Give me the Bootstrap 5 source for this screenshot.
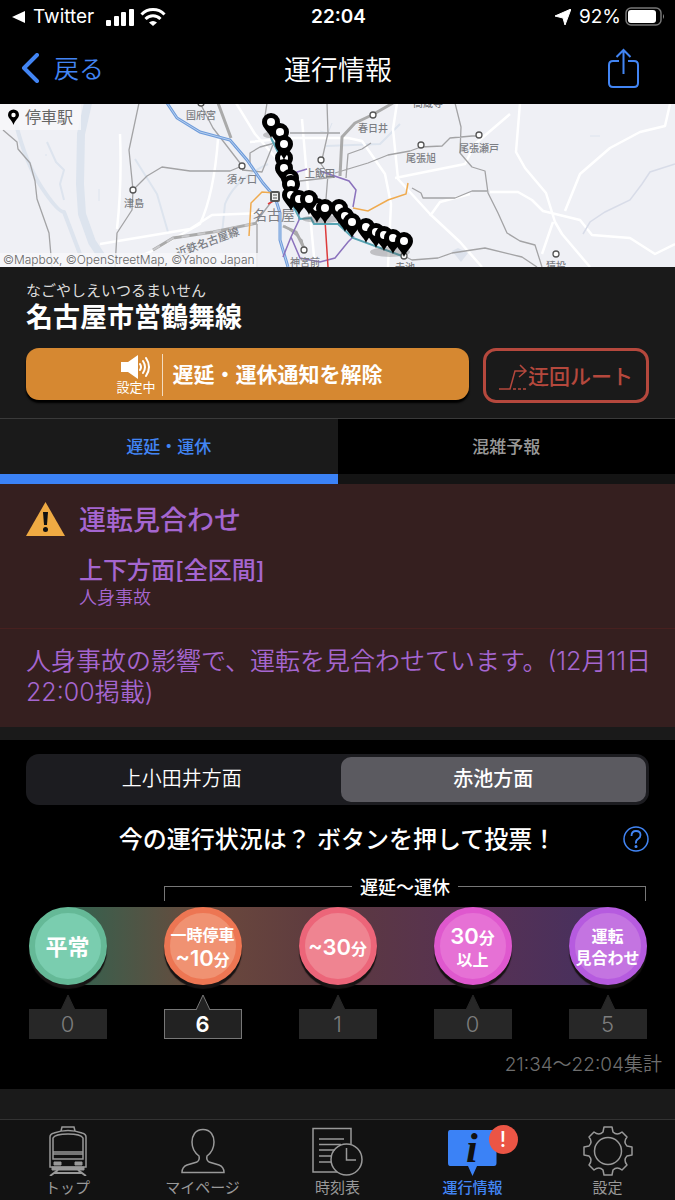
<!DOCTYPE html>
<html lang="ja" data-bs-theme="dark">
<head>
<meta charset="utf-8">
<meta name="viewport" content="width=device-width, initial-scale=1">
<title>運行情報</title>
<link rel="stylesheet" href="https://cdn.jsdelivr.net/npm/bootstrap@5.3.0/dist/css/bootstrap.min.css">
<style>
  :root { --accent: #4285f4; --panel: #1a1a1a; --edge: 26px; }
  body { background: #000; color: #fff; font-family: "Inter", "Noto Sans CJK JP", sans-serif; }
  svg { display: block; flex: none; }
  button { color: inherit; }
  .jp-light { font-weight: 350; }
  .jp-medium { font-weight: 500; }
  .edge-x { padding-left: var(--edge); padding-right: var(--edge); }
  .third { flex: 1 1 0; }

  .status-bar { height: 34px; padding: 0 10px 0 12px; font-size: 19px; line-height: 34px; }
  .top-bar { height: 70px; padding: 0 36px 0 21px; }
  .top-bar h1 { font-size: 27px; line-height: 34px; padding-top: 3px; }
  .back-link { color: var(--accent); font-size: 25px; line-height: 34px; gap: 15px; }
  .back-link span { padding-top: 3px; }

  .map-view { background: #eff0f5; height: 163px; }
  .map-view svg { width: 100%; height: 163px; }

  .panel { background: var(--panel); }
  .line-info { padding-top: 14px; padding-bottom: 15px; }
  .line-info .kana { font-size: 15px; line-height: 20px; color: #ddd; }
  .line-info h2 { font-size: 27px; line-height: 34px; margin-bottom: 13px; }
  .btn-notify { background: #d68831; border: 0; border-radius: 13px; height: 52px; font-size: 21px; line-height: 26px; box-shadow: 0 3px 2px #000; padding: 2px 0 0 4px; }
  .btn-notify .state { font-size: 13px; line-height: 16px; }
  .btn-notify .rule { width: 1px; height: 42px; background: #f3dcc0; margin: 0 10px 0 6px; }
  .btn-route { width: 166px; height: 55px; border: 3px solid #b5483d; border-radius: 13px; background: none; color: #b5483d; font-size: 21px; line-height: 26px; padding: 2px 0 0; }
  .button-row { gap: 14px; }

  .view-tabs { border-top: 1px solid #3a3a3a; background: var(--panel); }
  .view-tabs button { flex: 1 1 0; height: 65px; border: 0; border-bottom: 10px solid #141414; background: #000; color: #999; font-size: 17px; line-height: 24px; }
  .view-tabs .on { background: var(--panel); border-color: #3b82f6; color: var(--accent); }

  .notice { background: #351f1f; color: #a566d0; }
  .notice-head { padding-top: 17px; padding-bottom: 19px; gap: 14px; border-bottom: 1px solid #48201f; }
  .notice-head h3 { font-size: 27px; line-height: 40px; margin-bottom: 14px; color: inherit; }
  .notice-head h4 { font-size: 24px; line-height: 32px; color: inherit; }
  .notice-head p { font-size: 18px; line-height: 22px; }
  .notice-body { padding: 17px 20px 19px var(--edge); font-size: 25px; line-height: 31px; }
  .spacer-s { height: 13px; }

  .direction { background: #1c1c20; border-radius: 13px; padding: 3px; height: 51px; gap: 6px; }
  .direction label { flex: 1 1 0; border-radius: 10px; font-size: 20px; line-height: 45px; text-align: center; font-weight: 350; cursor: pointer; }
  .direction .btn-check:checked + label { background: #5b5a60; font-weight: 500; }
  .vote { padding-top: 14px; padding-bottom: 12px; }
  .vote h3 { font-size: 24px; line-height: 34px; padding-top: 2px; }
  .vote-title { margin-top: 16px; display: grid; grid-template-columns: 26px 1fr 26px; align-items: center; }
  .help { border: 0; padding: 0; background: none; color: var(--accent); }

  .bracket { margin: 18px 29px 6px calc(20% + 29px); height: 26px; gap: 8px; }
  .bracket span { height: 15px; border-top: 1px solid #777; flex: 1 1 0; }
  .bracket span:first-child { border-left: 1px solid #777; }
  .bracket span:last-child { border-right: 1px solid #777; }
  .bracket b { font-size: 18px; line-height: 26px; }
  .scale > * { flex: 1 1 0; }
  .scale { background: linear-gradient(90deg, #32624f, #6b493c 25%, #5c3940 50%, #573153 75%, #46305f) center / 80% 100% no-repeat; }
  .vote-btn { width: 78px; height: 78px; border-radius: 50%; border: 6px solid var(--ring); background: var(--fill); box-shadow: 0 4px 1px #171313; color: #fff; font-size: 16px; line-height: 22px; white-space: nowrap; padding: 2px 0 0; font-weight: 700; display: flex; align-items: center; justify-content: center; }
  .vote-btn .big { font-size: 22px; line-height: 24px; font-weight: 600; }
  .v-ok { --ring: #65b997; --fill: #7acdaf; }
  .v-10 { --ring: #ed7653; --fill: #f09272; }
  .v-30 { --ring: #ec6579; --fill: #ef8491; }
  .v-30p { --ring: #df58ce; --fill: #e671d5; }
  .v-stop { --ring: #b65bdf; --fill: #c474e1; }
  .counts { margin-top: 9px; }
  .tally { width: 78px; --tone: #272727; --line: #272727; color: #7d7d7d; font-size: 22px; line-height: 28px; font-weight: 350; }
  .tally svg { margin: 0 auto -1px; position: relative; }
  .tally output { display: block; text-align: center; background: var(--tone); border: 1px solid var(--line); }
  .tally.top { --tone: #222; --line: #777; color: #fff; font-weight: 600; }
  .stamp { margin-top: 14px; padding-right: 13px; font-size: 19px; line-height: 24px; color: #6e6e6e; }

  .tab-bar { background: #121212; border-top: 1px solid #333; height: 81px; }
  .tab-bar a { flex: 1 1 0; padding-top: 2px; font-size: 15px; line-height: 23px; color: #999; text-decoration: none; }
  .tab-bar a.on { color: var(--accent); }
  .alert-dot { position: absolute; left: 46px; top: 3px; width: 29px; height: 29px; border-radius: 50%; background: #eb5545; color: #fff; font-size: 21px; line-height: 29px; text-align: center; font-weight: 500; }
</style>
</head>
<body>
<div class="d-flex flex-column min-vh-100">

  <div class="status-bar d-flex align-items-center">
    <div class="third d-flex align-items-center gap-2">
      <svg width="13" height="12" viewBox="0 0 13 12"><path d="M13 0v12L0 6z" fill="#fff"/></svg>
      <span class="me-1">Twitter</span>
      <svg width="60" height="20" viewBox="0 0 60 20" fill="#fff">
        <rect x="0" y="13" width="5" height="6" rx="1"/><rect x="8" y="9" width="5" height="10" rx="1"/><rect x="15" y="5" width="5" height="14" rx="1"/><rect x="23" y="2" width="5" height="17" rx="1"/>
        <g fill="none" stroke="#fff" stroke-width="3"><path d="M35.500 7.500a16 16 0 0 1 23 0"/><path d="M39.500 12a10.500 10.500 0 0 1 15 0"/></g>
        <path d="M43 15.500a6 6 0 0 1 8 0L47 19z"/>
      </svg>
    </div>
    <div class="fw-semibold">22:04</div>
    <div class="third d-flex align-items-center justify-content-end">
      <svg class="me-2" width="16" height="16" viewBox="0 0 16 16"><path d="M16 0 10 16 8 9 0 7z" fill="#fff" stroke="#fff" stroke-linejoin="round"/></svg>
      <span class="me-1">92%</span>
      <svg width="40" height="20" viewBox="0 0 40 20"><rect x="1" y="1" width="35" height="17" rx="5" fill="none" stroke="#777" stroke-width="1.500"/><rect x="3" y="3" width="28" height="13" rx="3" fill="#fff"/><path d="M38 7q2 2.500 0 5z" fill="#888"/></svg>
    </div>
  </div>

  <header class="top-bar d-flex align-items-center">
    <div class="third"><a href="#" class="back-link jp-light d-inline-flex align-items-center text-decoration-none">
      <svg width="18" height="30" viewBox="0 0 18 30"><path d="M16 2 3 15l13 13" fill="none" stroke="#4285f4" stroke-width="4" stroke-linecap="round" stroke-linejoin="round"/></svg><span>戻る</span></a></div>
    <h1 class="jp-light mb-0 ms-3">運行情報</h1>
    <div class="third d-flex justify-content-end">
      <button class="help" aria-label="共有"><svg width="31" height="42" viewBox="0 0 31 42" fill="none" stroke="#4285f4" stroke-width="2"><path d="M11 13H5q-4 0-4 4v18q0 4 4 4h21q4 0 4-4V17q0-4-4-4h-6M15.500 26V2M8.500 9l7-7 7 7"/></svg></button>
    </div>
  </header>

  <div class="map-view">
    <svg viewBox="0 0 675 163" preserveAspectRatio="xMidYMid slice" fill="none" role="img" aria-label="停車駅の地図">
      <defs>
        <g id="pin"><path d="M0 16C-2 10-9 6-9 0a9 9 0 0 1 18 0C9 6 2 10 0 16z" fill="#000"/><circle r="4" fill="#fff"/></g>
      </defs>
      <g stroke="#dde4ee" stroke-linejoin="round">
        <path d="M88-1 81 30 80 80 82 110 92 138 110 165" stroke-width="8"/>
        <path d="M16 20Q26 60 42 84T64 108L80 150" stroke-width="4"/>
        <path d="M47 38 56 58 64 66 60 80 64 96 M135 55 157 90 168 128 M268 60Q235 75 225 100L222 130 M326 42 380 40 400 20" stroke-width="2"/>
        <path d="M99 85v12M46 50v2M320 27l8 2 4-10M590 32h10" stroke-width="1"/>
      </g>
      <g stroke="#fff" stroke-width="2.500" stroke-linejoin="round">
        <path d="M236-1 255 30 290 70M218 35Q214 90 200 120L150 148 110 165M100 140 190 125 212 111 260 109M250 38 290 34 348 34 362 37 385 70 391 100 388 163M302 15 310 110 315 163M117 125Q122 80 120 30M397-1 393 25 398 75 430 110 460 138 482 163M520-1 516 48 525 64 546 89 555 118 562 130 590 163M490 88 518 88 532 96 543 107 580 116 592 131 630 134 655 150 675 140M565 107 580 70 610 44 640 28 665 22 670 0M395 74 465 60 475 40 510 10M430 112 440 98 470 90M553 118 542 150" />
      </g>
      <path d="M675 60 650 68 642 80 630 96 605 108 590 118 583 130" stroke="#d8dce8" stroke-width="1.500"/>
      <path d="m452 147 6-3 10 5-7 9z" fill="#dde2ec"/>
      <g stroke="#a3a3a5" stroke-width="1.300" stroke-linejoin="round">
        <path d="M3 26 17 38 18 45 30 59 35 77 37 95 49 129 52 163M139-1 129 46 133 86 132 106 117 129 115 163M133 86 147 72 162 63 190 67H230L242 62M200-1 213 24 240 59M242 66 262 68 274 38 M250 60 250 49 260 43 275 39M290 29H340M327-1 328 29 321 60 328 70 326 95M267-1 265 12M335 69 368 59 388 51 410 47 421 43 442 42 450 34 472 32 478 32M455-1 461 23 460 49 472 63 485 67 488 89 498 109 507 129 520 137 535 141 542 163M412 84 421 89 423 94H455L472 87H487M404 152 412 156 438 154 452 149 485 144 522 153 537 163M346 74 348 50 362 45 371 39M257 120V163M304 146 302 136 285 122M275 93 256 118M300 77 335 73"/>
        <path d="M340 72 342 33 355 19 372 11 393-1M218-1 231 34 M153 146 173 134 213 128 257 119M283 122 296 128 304 144" stroke="#aaa" stroke-width="3"/>
        <path d="M153 146 173 134 213 128 257 119" stroke="#c9c9cc" stroke-width="2" stroke-dasharray="8 8"/>
      </g>
      <path d="M167-1 177 14 200 28 230 36 247 56 263 79 275 93 280 109 280 136 288 163" stroke="#6f9cdb" stroke-width="3"/>
      <path d="M167-1 177 14 200 28 230 36 247 56 263 79 275 93 280 109 280 136 288 163" stroke="#b8d0ee" stroke-width="1"/>
      <path d="M249 132 251 99 262 88 275 89M353 104 368 107 388 96 406 90 408 79" stroke="#efaa4e" stroke-width="1.500"/>
      <path d="M307 65 297 68 299 116 291 133 283 153M291 133 300 154 320 158 335 154 348 138 354 132M320 67 349 77 356 86 353 103" stroke="#8b72bd" stroke-width="1.500"/>
      <path d="M325 116 328 163M268 100 275 96" stroke="#dd3b3b" stroke-width="1.500"/>
      <path d="M271 34 284 60 291 98 300 115 311 114 314 120H338L353 134 402 152" stroke="#58a5b4" stroke-width="2"/>
      <g fill="#fff" stroke="#555" stroke-width="1.300">
        <circle cx="133" cy="86" r="3"/><circle cx="242" cy="62" r="3"/><circle cx="321" cy="56" r="3"/><circle cx="373" cy="11" r="3"/><circle cx="421" cy="41" r="3"/><circle cx="479" cy="31" r="3"/><circle cx="304" cy="146" r="3"/><circle cx="556" cy="150" r="3"/><circle cx="404" cy="152" r="3"/><circle cx="201" cy="-1" r="3"/>
      </g>
      <rect x="271" y="88" width="8" height="9" rx="1" fill="#eee" stroke="#555" stroke-width="2"/><path d="M273 91h4M273 94h4" stroke="#555"/>
      <g fill="#7c7e84" font-size="10" font-weight="500">
        <text x="186" y="15">国府宮</text><text x="124" y="103">津島</text><text x="227" y="79">須ヶ口</text><text x="305" y="73">上飯田</text>
        <text x="358" y="28">春日井</text><text x="406" y="58">尾張旭</text><text x="459" y="48">尾張瀬戸</text><text x="413" y="3">高蔵寺</text>
        <text x="290" y="162">神宮前</text><text x="395" y="167">赤池</text><text x="546" y="166">猿投</text>
        <text x="253" y="116" font-size="14" font-weight="400">名古屋</text>
        <text transform="translate(178 153) rotate(-20)" font-size="11">近鉄名古屋線</text>
      </g>
      <g opacity=".3" fill="#555"><ellipse cx="269" cy="31" rx="6" ry="3"/><ellipse cx="322" cy="115" rx="20" ry="4"/><ellipse cx="390" cy="148" rx="20" ry="5"/></g>
      <use href="#pin" x="271" y="18"/><use href="#pin" x="280" y="28"/><use href="#pin" x="284" y="54"/><use href="#pin" x="284" y="40"/><use href="#pin" x="284" y="64"/><use href="#pin" x="290" y="74"/><use href="#pin" x="291" y="80"/><use href="#pin" x="291" y="91"/><use href="#pin" x="299" y="95"/><use href="#pin" x="317" y="103"/><use href="#pin" x="309" y="95"/><use href="#pin" x="325" y="104"/><use href="#pin" x="339" y="104"/><use href="#pin" x="345" y="112"/><use href="#pin" x="352" y="118"/><use href="#pin" x="366" y="123"/><use href="#pin" x="376" y="128"/><use href="#pin" x="384" y="131"/><use href="#pin" x="393" y="134"/><use href="#pin" x="404" y="137"/>
      <path d="M0 0H81V26H0zM0 149H258V163H0z" fill="#f8f8fa" fill-opacity=".8"/>
      <path d="M13.500 21C12 16 8 14 8 11a5.500 5.500 0 0 1 11 0C19 14 15 16 13.500 21z" fill="#000"/><circle cx="13.500" cy="11" r="2.200" fill="#fff"/>
      <text x="25" y="19" font-size="16" fill="#666">停車駅</text>
      <text x="3" y="160" font-size="12" fill="#666" font-weight="350">©Mapbox, ©OpenStreetMap, ©Yahoo Japan</text>
    </svg>
  </div>

  <section class="panel line-info edge-x">
    <div class="kana">なごやしえいつるまいせん</div>
    <h2 class="fw-bold">名古屋市営鶴舞線</h2>
    <div class="button-row d-flex align-items-start">
      <button class="btn-notify flex-fill d-flex align-items-center justify-content-center">
        <span class="state fw-normal d-flex flex-column align-items-center">
          <svg width="30" height="24" viewBox="0 0 30 24"><path d="M0 7h7L17 0v24L7 17H0z" fill="#fff"/><path d="M19 9q2 3 0 6M22 6q4 6 0 12M25 3q6 9 0 18" stroke="#fff" stroke-width="2" fill="none" stroke-linecap="round"/></svg>設定中</span>
        <span class="rule"></span><span class="fw-bold">遅延・運休通知を解除</span>
      </button>
      <button class="btn-route d-flex align-items-center justify-content-center jp-medium">
        <svg width="29" height="26" viewBox="0 0 29 26" fill="none" stroke="#b5483d" stroke-width="1.500"><path d="M0 25H11L16 7H26M21 1l6 6-7 6"/><path d="M14 25H28" stroke-dasharray="3 2"/></svg><span>迂回ルート</span>
      </button>
    </div>
  </section>

  <div class="view-tabs d-flex" role="tablist">
    <button class="on jp-medium" role="tab" aria-selected="true">遅延・運休</button>
    <button class="jp-medium" role="tab" aria-selected="false">混雑予報</button>
  </div>

  <section class="notice">
    <div class="notice-head edge-x d-flex align-items-start">
      <svg width="39" height="35" viewBox="0 0 39 35"><path d="M19.500 1 39 35H0z" fill="#efaa43"/><path d="M17 11h5l-1 13h-3z" fill="#111"/><circle cx="19.500" cy="28.500" r="2.500" fill="#111"/></svg>
      <div><h3 class="jp-medium">運転見合わせ</h3><h4 class="jp-medium mb-0">上下方面[全区間]</h4><p class="jp-light mb-0">人身事故</p></div>
    </div>
    <p class="notice-body jp-light mb-0">人身事故の影響で、運転を見合わせています。(12月11日22:00掲載)</p>
  </section>
  <div class="panel spacer-s"></div>

  <section class="vote">
    <div class="edge-x">
      <div class="direction d-flex">
        <input class="btn-check" type="radio" name="dir" id="dir-a"><label for="dir-a">上小田井方面</label>
        <input class="btn-check" type="radio" name="dir" id="dir-b" checked><label for="dir-b">赤池方面</label>
      </div>
      <div class="vote-title">
        <span></span><h3 class="jp-medium text-center mb-0">今の運行状況は？ ボタンを押して投票！</h3>
        <button class="help" aria-label="ヘルプ"><svg width="26" height="26" viewBox="0 0 26 26" fill="none" stroke="#4285f4" stroke-width="1.500"><circle cx="13" cy="13" r="12"/><path d="M8.500 10q0-5 4.500-5t4.500 4q0 2.500-2.500 4t-2 4.500" stroke-width="1.800"/><circle cx="13" cy="20.500" r=".8" fill="#4285f4"/></svg></button>
      </div>
    </div>
    <div class="bracket d-flex align-items-end"><span></span><b class="jp-medium align-self-start">遅延〜運休</b><span></span></div>
    <div class="scale d-flex">
      <div class="d-flex justify-content-center"><button class="vote-btn v-ok"><span class="big">平常</span></button></div>
      <div class="d-flex justify-content-center"><button class="vote-btn v-10"><span>一時停車<br><span class="big">~10</span>分</span></button></div>
      <div class="d-flex justify-content-center"><button class="vote-btn v-30"><span><span class="big">~30</span>分</span></button></div>
      <div class="d-flex justify-content-center"><button class="vote-btn v-30p"><span><span class="big">30</span>分<br>以上</span></button></div>
      <div class="d-flex justify-content-center"><button class="vote-btn v-stop"><span>運転<br>見合わせ</span></button></div>
    </div>
    <div class="counts d-flex" id="counts"></div>
    <div class="stamp text-end jp-light">21:34〜22:04集計</div>
  </section>
  <div class="panel flex-fill"></div>

  <nav class="tab-bar d-flex">
    <a href="#" class="d-flex flex-column align-items-center"><svg width="60" height="54" viewBox="0 0 60 54" fill="none" stroke="#999" stroke-width="1.500"><path d="M23 9 24 5H36L37 9M12 45V15Q12 12 16 11 30 6 44 11 48 12 48 15V45z"/><path d="M15 37V16Q17 12 30 12T45 16V37zM15 30H45M15 32H45"/><path d="M16 40h7v3h-7zM37 40h7v3h-7zM14 45H46V48H14z" fill="#999" stroke-width="1"/><path d="M20 48 12 54M40 48 48 54M17 51H43" stroke-width="2"/></svg>トップ</a>
    <a href="#" class="d-flex flex-column align-items-center"><svg width="60" height="54" viewBox="0 0 60 54" fill="none" stroke="#999" stroke-width="1.500"><path d="M30 7.500C22 7.500 19 14 19 20 19 27 22 31 26 34Q27 38 24 40L14 43Q9 45 9 50.500H51Q51 45 46 43L36 40Q33 38 34 34C38 31 41 27 41 20 41 14 38 7.500 30 7.500z"/></svg>マイページ</a>
    <a href="#" class="d-flex flex-column align-items-center"><svg width="60" height="54" viewBox="0 0 60 54" fill="none" stroke="#999" stroke-width="1.500"><path d="M43 22V6.500H5V50H29M11 17H36M11 22.500H33M11 28H27M11 34H23M11 40H23"/><circle cx="38.500" cy="37.500" r="15.500"/><path d="M38.500 26V38H48"/></svg>時刻表</a>
    <a href="#" class="on d-flex flex-column align-items-center jp-medium"><span class="position-relative"><svg width="60" height="54" viewBox="0 0 60 54"><path d="M7 8H51Q53.500 8 53.500 11V41Q53.500 44 51 44H34L29.500 54 25 44H7Q5 44 5 41V11Q5 8 7 8z" fill="#3b82f6"/><text x="23" y="40" font-family="Liberation Serif, serif" font-style="italic" font-weight="700" font-size="42" fill="#111">i</text></svg><span class="alert-dot">!</span></span>運行情報</a>
    <a href="#" class="d-flex flex-column align-items-center"><svg width="60" height="54" viewBox="-30 -29 60 54" fill="none" stroke="#999" stroke-width="1.500" stroke-linejoin="round"><circle r="13.500"/><path d="M-4-24H4L5-19Q9-15 14-19L19-14Q15-9 19-5L24-4V4L19 5Q15 9 19 14L14 19Q9 15 5 19L4 24H-4L-5 19Q-9 15-14 19L-19 14Q-15 9-19 5L-24 4V-4L-19-5Q-15-9-19-14L-14-19Q-9-15-5-19z"/></svg>設定</a>
  </nav>
</div>
<script src="https://cdn.jsdelivr.net/npm/bootstrap@5.3.0/dist/js/bootstrap.bundle.min.js"></script>
<script>
  // One tally box per vote button; the leading one is outlined.
  const votes = [0, 6, 1, 0, 5];
  const most = Math.max(...votes);
  document.getElementById('counts').innerHTML = votes.map(n => `
    <div class="third d-flex justify-content-center"><div class="tally ${n === most ? 'top' : ''}">
      <svg width="14" height="16" viewBox="0 0 14 16"><path d="M0 16 7 1 14 16" fill="var(--tone)" stroke="var(--line)"/></svg>
      <output>${n}</output></div></div>`).join('');
</script>
</body>
</html>
